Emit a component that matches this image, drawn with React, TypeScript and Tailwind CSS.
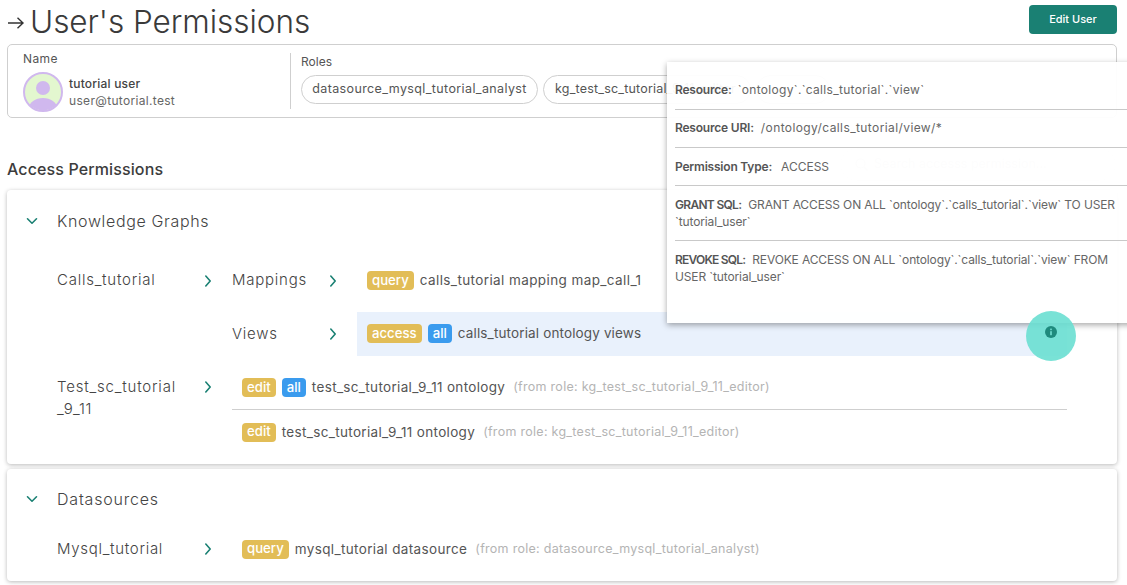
import React from "react";

const Chevron = ({ down = false, className = "" }: { down?: boolean; className?: string }) => (
  <svg width="16" height="16" viewBox="0 0 16 16" fill="none" stroke="#1a8073" strokeWidth="1.6" strokeLinecap="round" strokeLinejoin="round" className={className}>
    {down ? <path d="M3.5 5.8 8 10.2l4.5-4.4" /> : <path d="M5.8 3 10.2 8l-4.4 5" />}
  </svg>
);

const Badge = ({ color, children }: { color: "y" | "b"; children: React.ReactNode }) => (
  <span className={(color === "y" ? "bg-[#e2bd57] " : "bg-[#3a9bee] ") + "inline-flex h-[19px] items-center rounded-[4px] px-[5px] text-[13.2px] font-medium text-white mr-[6px] shrink-0"}>
    {children}
  </span>
);

const From = ({ children }: { children: React.ReactNode }) => (
  <span className="ml-[8px] text-[12.5px] text-[#b4b4b4] tracking-[0.28px]">{children}</span>
);

const PopRow = ({ label, labelClass = "tracking-[-0.2px]", gap, children, className }: { label: string; labelClass?: string; gap: string; children: React.ReactNode; className: string }) => (
  <div className={"border-[#c9c9c9] " + className}>
    <span className={"font-semibold text-[#555] " + labelClass}>{label}</span>
    <span className={gap + " text-[#666]"}>{children}</span>
  </div>
);

export default function App() {
  return (
    <div className="relative h-[585px] w-[1127px] overflow-hidden bg-white pl-[7px] pr-[10px] font-['Inter','Noto_Sans',sans-serif] text-[#444]">
      <header className="flex h-[44px] items-start justify-between">
        <div className="flex items-center pt-[6px]">
          <svg width="18" height="14" viewBox="0 0 18 14" fill="none" stroke="#333" strokeWidth="1.4" className="mr-[5px] mt-[2px]">
            <path d="M1 7h15M10.5 1.8 16 7l-5.500 5.200" />
          </svg>
          <h1 className="text-[31.5px] font-light leading-none tracking-[-0.05px] text-[#3a3a3a]">User's Permissions</h1>
        </div>
        <button className="mt-[5px] h-[29px] w-[88px] rounded-[4px] bg-[#1a8073] text-[11px] font-medium text-white">Edit User</button>
      </header>

      <section className="flex h-[74px] rounded-[5px] border border-[#cfcfcf] pl-[15px]">
        <div className="h-full w-[267px] pt-[6px]">
          <div className="text-[12px] leading-[16px] tracking-[0.4px] text-[#555]">Name</div>
          <div className="mt-[5px] flex items-center gap-[6px]">
            <svg width="40" height="40" viewBox="0 0 40 40" className="shrink-0">
              <defs>
                <clipPath id="av"><circle cx="20" cy="20" r="18.500" /></clipPath>
              </defs>
              <circle cx="20" cy="20" r="19" fill="#e3f7cf" stroke="#d0b8ee" strokeWidth="2" />
              <circle cx="20" cy="16" r="7" fill="#d0b8ee" />
              <ellipse cx="20" cy="36" rx="14" ry="10" fill="#d0b8ee" clipPath="url(#av)" />
            </svg>
            <div className="mb-[1px]">
              <div className="text-[12px] font-medium leading-[17px] tracking-[0.2px] text-[#444]">tutorial user</div>
              <div className="text-[12px] leading-[17px] text-[#666] tracking-[0.32px]">user@tutorial.test</div>
            </div>
          </div>
        </div>
        <div className="my-[8px] w-px bg-[#cfcfcf]" />
        <div className="pl-[10px] pt-[9px]">
          <div className="text-[12px] leading-[16px] text-[#555]">Roles</div>
          <div className="mt-[5px] flex gap-[5px]">
            <span className="flex h-[29px] w-[237px] items-center justify-center rounded-full border border-[#cfcfcf] text-[12.5px] text-[#555] tracking-[0.38px]">datasource_mysql_tutorial_analyst</span>
            <span className="flex h-[29px] w-[208px] items-center rounded-full border border-[#cfcfcf] pl-[11px] text-[12.5px] text-[#555] tracking-[0.2px]">kg_test_sc_tutorial_9_11_editor</span>
            <span className="h-[29px] w-[74px] rounded-full border border-[#cfcfcf]" />
          </div>
        </div>
      </section>

      <div className="mt-[30px] flex h-[33px] items-center justify-between pr-[1px]">
        <h2 className="mt-[8px] text-[16px] font-medium tracking-[0.12px] text-[#3c3c3c]">Access Permissions</h2>
        <div className="flex h-[33px] w-[276px] items-center gap-[6px] rounded-full border border-[#ececec] pl-[14px] text-[12.500px] text-[#ccc]">
          <svg width="13" height="13" viewBox="0 0 13 13" fill="none" stroke="#ccc" strokeWidth="1.2"><circle cx="5.500" cy="5.500" r="4.500" /><path d="m9 9 3.500 3.500" /></svg>
          Search accesss permission...
        </div>
      </div>

      <section className="mt-[9px] h-[274px] rounded-[4px] bg-white shadow-[0_1px_4px_rgba(0,0,0,0.28)]">
        <div className="flex h-[62px] items-center pl-[17px]">
          <Chevron down />
          <span className="ml-[17px] text-[16px] font-light tracking-[0.65px] text-[#444]">Knowledge Graphs</span>
        </div>

        <div className="mt-[7px] flex h-[107px] pl-[50px]">
          <div className="flex h-[43px] w-[175px] items-center justify-between pr-[18px]">
            <span className="text-[15px] font-light tracking-[0.75px]">Calls_tutorial</span>
            <Chevron className="mr-[-2px]" />
          </div>
          <div className="flex-1">
            <div className="flex h-[53px] items-start">
              <div className="flex h-[43px] w-[125px] items-center justify-between pr-[16px]">
                <span className="text-[15px] font-light tracking-[0.75px]">Mappings</span>
                <Chevron />
              </div>
              <div className="flex h-[43px] items-center pl-[10px] text-[13.5px] text-[#555]">
                <Badge color="y">query</Badge>
                <span className="tracking-[0.4px]">calls_tutorial mapping map_call_1</span>
              </div>
            </div>
            <div className="flex h-[44px] items-center">
              <div className="flex h-[43px] w-[125px] items-center justify-between pr-[16px]">
                <span className="text-[15px] font-light tracking-[0.75px]">Views</span>
                <Chevron />
              </div>
              <div className="flex h-[44px] w-[710px] items-center bg-[#e9f1fc] pb-[1px] pl-[10px] text-[13.5px] text-[#555]">
                <Badge color="y">access</Badge>
                <Badge color="b">all</Badge>
                <span className="tracking-[0.14px]">calls_tutorial ontology views</span>
              </div>
            </div>
          </div>
        </div>

        <div className="flex h-[88px] pl-[50px]">
          <div className="flex w-[175px] items-start justify-between pr-[18px] pt-[10px]">
            <span className="text-[15px] font-light leading-[22px] tracking-[0.8px]">Test_sc_tutorial<br />_9_11</span>
            <Chevron className="mr-[-2px] mt-[3px]" />
          </div>
          <div className="w-[835px]">
            <div className="flex h-[44px] items-center border-b border-[#cfcfcf] pl-[10px] text-[13.5px] text-[#555]">
              <Badge color="y">edit</Badge>
              <Badge color="b">all</Badge>
              <span className="tracking-[0.33px]">test_sc_tutorial_9_11 ontology</span>
              <From>(from role: kg_test_sc_tutorial_9_11_editor)</From>
            </div>
            <div className="flex h-[44px] items-center pl-[10px] text-[13.5px] text-[#555]">
              <Badge color="y">edit</Badge>
              <span className="tracking-[0.33px]">test_sc_tutorial_9_11 ontology</span>
              <From>(from role: kg_test_sc_tutorial_9_11_editor)</From>
            </div>
          </div>
        </div>
      </section>

      <section className="mt-[5px] h-[112px] rounded-[4px] bg-white shadow-[0_1px_4px_rgba(0,0,0,0.28)]">
        <div className="flex h-[60px] items-center pl-[17px]">
          <Chevron down />
          <span className="ml-[17px] text-[16px] font-light tracking-[0.8px] text-[#444]">Datasources</span>
        </div>
        <div className="flex h-[40px] items-center pl-[50px]">
          <div className="flex w-[175px] items-center justify-between pr-[18px]">
            <span className="text-[15px] font-light tracking-[0.7px]">Mysql_tutorial</span>
            <Chevron className="mr-[-2px]" />
          </div>
          <div className="flex items-center pl-[10px] text-[13.5px] text-[#555]">
            <Badge color="y">query</Badge>
            <span className="tracking-[0.36px]">mysql_tutorial datasource</span>
            <From>(from role: datasource_mysql_tutorial_analyst)</From>
          </div>
        </div>
      </section>

      <aside className="absolute left-[667px] top-[62px] h-[261px] w-[480px] bg-white/95 pl-[8px] text-[12px] shadow-[0_2px_6px_rgba(0,0,0,0.35)]">
        <PopRow label="Resource:" gap="ml-[6px] tracking-[0.3px]" className="h-[48px] border-b pt-[19px] leading-[18px]">`ontology`.`calls_tutorial`.`view`</PopRow>
        <PopRow label="Resource URI:" gap="ml-[7px] tracking-[0.4px]" className="h-[38px] border-b pt-[9px] leading-[18px]">/ontology/calls_tutorial/view/*</PopRow>
        <PopRow label="Permission Type:" gap="ml-[9px]" className="h-[38px] border-b pt-[10px] leading-[18px]">ACCESS</PopRow>
        <PopRow label="GRANT SQL:" labelClass="tracking-[-0.7px]" gap="ml-[7px] tracking-[-0.13px]" className="h-[55px] border-b pt-[10px] leading-[17px]">GRANT ACCESS ON ALL `ontology`.`calls_tutorial`.`view` TO USER<br />`tutorial_user`</PopRow>
        <PopRow label="REVOKE SQL:" labelClass="tracking-[-0.8px]" gap="ml-[7px] tracking-[-0.13px]" className="pt-[10px] leading-[17px]">REVOKE ACCESS ON ALL `ontology`.`calls_tutorial`.`view` FROM<br />USER `tutorial_user`</PopRow>
      </aside>

      <div className="absolute left-[1026px] top-[311px] flex h-[50px] w-[50px] items-start justify-center rounded-full bg-[#6adfd1]/90 pt-[15px]">
        <svg width="12" height="12" viewBox="0 0 12 12">
          <circle cx="6" cy="6" r="6" fill="#1f8a7d" />
          <rect x="5.200" y="5.200" width="1.600" height="4" fill="#74dfd3" />
          <rect x="5.200" y="2.600" width="1.600" height="1.600" fill="#74dfd3" />
        </svg>
      </div>
    </div>
  );
}
